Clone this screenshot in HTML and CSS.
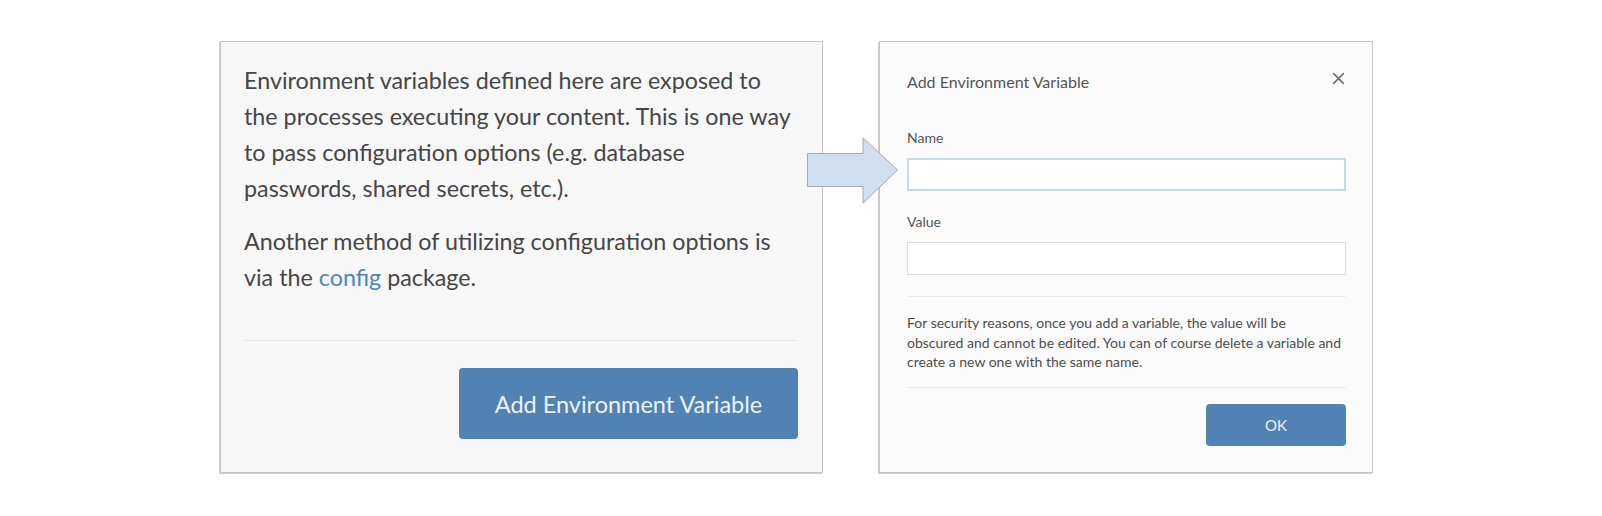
FILE: index.html
```html
<!DOCTYPE html>
<html>
<head>
<meta charset="utf-8">
<link rel="stylesheet" href="styles.css">
</head>
<body>
<div class="page">
  <div class="stage">
    <section class="panel panel-info">
      <p class="para">Environment variables defined here are exposed to<br>the processes executing your content. This is one way<br>to pass configuration options (e.g. database<br>passwords, shared secrets, etc.).</p>
      <p class="para">Another method of utilizing configuration options is<br>via the <a class="link" href="#">config</a> package.</p>
      <hr class="rule rule-info">
      <div class="actions">
        <button class="btn btn-large">Add Environment Variable</button>
      </div>
    </section>
    <section class="panel panel-dialog">
      <div class="dialog-head">
        <span class="dialog-title">Add Environment Variable</span>
        <svg class="close" viewBox="0 0 12 12" width="13" height="13"><path d="M1.5 1.5 L10.5 10.5 M10.5 1.5 L1.5 10.5" stroke="#6f6f6f" stroke-width="1.4" fill="none" stroke-linecap="round"/></svg>
      </div>
      <label class="field-label">Name</label>
      <div class="input input-focus"></div>
      <label class="field-label field-label-2">Value</label>
      <div class="input"></div>
      <hr class="rule rule-dialog">
      <p class="note">For security reasons, once you add a variable, the value will be<br>obscured and cannot be edited. You can of course delete a variable and<br>create a new one with the same name.</p>
      <hr class="rule rule-dialog rule-bottom">
      <div class="actions">
        <button class="btn btn-ok">OK</button>
      </div>
    </section>
    <svg class="arrow" width="92" height="68" viewBox="0 0 92 68">
      <polygon points="0.5,16.5 56,16.5 56,0.8 90.5,33 56,66.2 56,49.5 0.5,49.5" fill="#cfdff0" stroke="#a9a9a9" stroke-width="1"/>
    </svg>
  </div>
</div>
</body>
</html>
```

FILE: styles.css
```css
html, body {
  margin: 0;
  padding: 0;
  background: #ffffff;
}
body {
  width: 1602px;
  height: 516px;
  overflow: hidden;
  font-family: Lato, "Open Sans", sans-serif;
}
.page {
  padding: 41px 0 0 220px;
}
.stage {
  position: relative;
  display: flex;
  gap: 56px;
  align-items: flex-start;
}
.panel {
  box-sizing: border-box;
  height: 432px;
  border: 1px solid #c6c6c6;
  box-shadow: -1px 1px 0 #cfcfcf;
}
.panel-info {
  width: 603px;
  background: #f7f7f7;
  padding: 20px 24px 0 23px;
  color: #464646;
}
.para {
  margin: 0 0 17px 0;
  font-size: 23.3px;
  line-height: 36px;
  white-space: nowrap;
}
.link {
  color: #4a86bf;
  text-decoration: none;
}
.rule {
  border: 0;
  height: 1px;
  margin: 0;
}
.rule-info {
  background: #e6e6e6;
  margin-top: 45px;
}
.actions {
  display: flex;
  justify-content: flex-end;
}
.btn {
  border: 0;
  font-family: Lato, "Open Sans", sans-serif;
  color: #eef3f8;
  background: #5083b3;
  border-radius: 4px;
  cursor: pointer;
}
.btn-large {
  margin-top: 27px;
  width: 339px;
  height: 71px;
  font-size: 23.5px;
}
.panel-dialog {
  width: 494px;
  background: #fbfbfb;
  padding: 30px 26px 0 27px;
  color: #555555;
}
.dialog-head {
  display: flex;
  justify-content: space-between;
  align-items: center;
  height: 20px;
}
.dialog-title {
  font-size: 16px;
  line-height: 20px;
}
.close {
  margin-right: 1px;
  margin-top: -7px;
}
.field-label {
  display: block;
  margin-top: 37px;
  font-size: 14px;
  line-height: 18px;
  color: #555555;
}
.field-label-2 {
  margin-top: 22px;
}
.input {
  box-sizing: border-box;
  margin-top: 11px;
  height: 33px;
  background: #ffffff;
  border: 1px solid #dedede;
}
.input-focus {
  border: 2px solid #c9d9e8;
}
.rule-dialog {
  background: #ebebeb;
  margin-top: 21px;
}
.note {
  margin: 16px 0 0 0;
  font-size: 14px;
  line-height: 19.5px;
  color: #4e4e4e;
  white-space: nowrap;
}
.rule-bottom {
  margin-top: 15px;
}
.btn-ok {
  margin-top: 16px;
  width: 140px;
  height: 42px;
  font-size: 15px;
}
.arrow {
  position: absolute;
  left: 587px;
  top: 96px;
}
```
